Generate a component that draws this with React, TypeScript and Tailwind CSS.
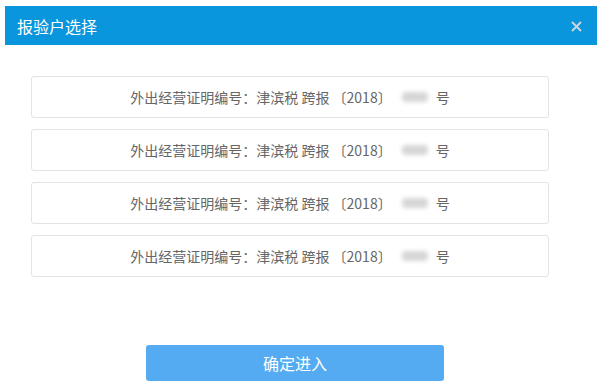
import React from 'react';

const rows = [0, 1, 2, 3];

function CertRow() {
  return (
    <div className="h-[42px] w-[518px] rounded-[3px] border border-[#e3e3e3] bg-white flex items-center justify-center text-[14px] text-[#666666]">
      <span>外出经营证明编号：津滨税 跨报 〔2018〕</span>
      <span className="ml-[10px] mr-[8px] inline-block h-[10px] w-[26px] rounded-sm bg-[#d6d6d6] blur-[2px]" />
      <span>号</span>
    </div>
  );
}

export default function App() {
  return (
    <div
      className="w-[605px] h-[389px] bg-white overflow-hidden pt-[6px]"
      style={{ fontFamily: '"Microsoft YaHei", "Noto Sans CJK SC", sans-serif' }}
    >
      <div className="ml-[5px] w-[592px] h-[39px] bg-[#0a96dc] flex items-center justify-between pl-[12px] pr-[15px]">
        <span className="text-white text-[16px]">报验户选择</span>
        <svg width="11" height="11" viewBox="0 0 11 11" className="mt-[1px]">
          <path d="M1 1 L10 10 M10 1 L1 10" stroke="#cfd8de" strokeWidth="1.8" />
        </svg>
      </div>
      <div className="ml-[31px] mt-[31px] flex flex-col gap-[11px]">
        {rows.map((i) => (
          <CertRow key={i} />
        ))}
      </div>
      <div className="ml-[146px] mt-[68px]">
        <button className="w-[298px] h-[36px] rounded-[3px] bg-[#55abf1] text-white text-[16px]">
          确定进入
        </button>
      </div>
    </div>
  );
}
